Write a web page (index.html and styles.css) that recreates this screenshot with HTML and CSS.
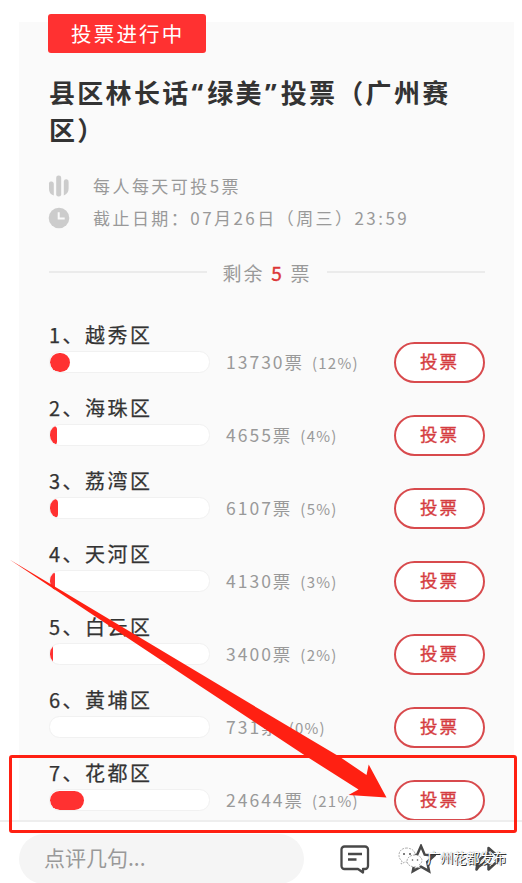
FILE: index.html
```html
<!DOCTYPE html>
<html lang="zh-CN">
<head>
<meta charset="utf-8">
<title>县区林长话“绿美”投票</title>
<link rel="stylesheet" href="styles.css">
</head>
<body>
<div class="screen">
  <main class="card">
    <span class="status">投票进行中</span>
    <h1 class="title">县区林长话<span class="quote">“</span>绿美<span class="quote">”</span>投票（广州赛<br>区）</h1>
    <div class="info">
      <svg class="info-icon" viewBox="0 0 22 22"><g fill="#ccc"><path d="M1 9.500a2.400 2.400 0 0 1 4.800-1v12Q1 19 1 14z"/><rect x="8.200" y=".5" width="5" height="21" rx="2.300"/><path d="M20.600 7a2.400 2.400 0 0 0-4.800-.5v14q4.800-2 4.800-7z"/></g></svg>
      <span class="info-text">每人每天可投5票</span>
    </div>
    <div class="info">
      <svg class="info-icon" viewBox="0 0 22 22"><circle cx="11" cy="11" r="10.300" fill="#ccc"/><path d="M10.700 5.200v6.200h6" fill="none" stroke="#fafafa" stroke-width="2"/></svg>
      <span class="info-text">截止日期：07月26日（周三）23:59</span>
    </div>
    <div class="remain"><span class="remain-text">剩余 <b class="remain-count">5</b> 票</span></div>
    <ul class="list">
      <li class="row"><div class="option"><div class="name">1、越秀区</div><div class="bar"><div class="fill" style="width:20px"></div></div></div><div class="votes">13730票<small>(12%)</small></div><button class="vote">投票</button></li>
      <li class="row"><div class="option"><div class="name">2、海珠区</div><div class="bar"><div class="fill" style="width:6.5px"></div></div></div><div class="votes">4655票<small>(4%)</small></div><button class="vote">投票</button></li>
      <li class="row"><div class="option"><div class="name">3、荔湾区</div><div class="bar"><div class="fill" style="width:8px"></div></div></div><div class="votes">6107票<small>(5%)</small></div><button class="vote">投票</button></li>
      <li class="row"><div class="option"><div class="name">4、天河区</div><div class="bar"><div class="fill" style="width:5px"></div></div></div><div class="votes">4130票<small>(3%)</small></div><button class="vote">投票</button></li>
      <li class="row"><div class="option"><div class="name">5、白云区</div><div class="bar"><div class="fill" style="width:3.3px"></div></div></div><div class="votes">3400票<small>(2%)</small></div><button class="vote">投票</button></li>
      <li class="row"><div class="option"><div class="name">6、黄埔区</div><div class="bar"><div class="fill" style="width:0"></div></div></div><div class="votes">731票<small>(0%)</small></div><button class="vote">投票</button></li>
      <li class="row"><div class="option"><div class="name">7、花都区</div><div class="bar"><div class="fill" style="width:33.5px"></div></div></div><div class="votes">24644票<small>(21%)</small></div><button class="vote">投票</button></li>
    </ul>
  </main>
  <footer class="toolbar">
    <div class="comment">点评几句...</div>
    <svg class="tool comment-icon" viewBox="0 0 30 30"><g fill="none" stroke="#484848" stroke-width="2.300" stroke-linejoin="round"><path d="M4.500 2.500h20.500a3 3 0 0 1 3 3v16.500a3 3 0 0 1-3 3h-2v3.500l-5-3.500H4.500a3 3 0 0 1-3-3v-16.500a3 3 0 0 1 3-3z"/><path d="M8 10h14M8 15.500h8.500"/></g></svg>
    <svg class="tool star-icon" viewBox="0 0 30 30"><path d="M15 2l3.700 8.700 9.500 1-7 6.300 1.900 9.200L15 22.600l-8.200 4.600L8.700 18l-7-6.300 9.500-1z" fill="none" stroke="#484848" stroke-width="2.500"/></svg>
    <svg class="tool share-icon" viewBox="0 0 30 30"><path d="M15.500 4l12 10.500-12 11v-6.500q-8 0-12 6.500 1-13 12-14.500z" fill="none" stroke="#484848" stroke-width="2.500" stroke-linejoin="round"/></svg>
  </footer>
  <div class="watermark">
    <svg class="wechat" viewBox="0 0 26 22"><g fill="#fff" stroke="#999" stroke-width=".8" stroke-dasharray="2 1"><path d="M9 1C4 1 1 4 1 8q0 4 3 6l-1 3 4-2q9 1 10-7 0-6-8-7z"/><path d="M17 8c-5 0-8 3-8 6 0 4 4 6 9 6l4 1-1-3c6-4 2-10-4-10z"/></g><g fill="#555"><circle cx="6" cy="7" r="1"/><circle cx="12" cy="7" r="1"/><circle cx="14.500" cy="13" r=".8"/><circle cx="19.500" cy="13" r=".8"/></g></svg>
    <span>广州花都发布</span>
  </div>
  <div class="highlight"></div>
  <svg class="arrow" viewBox="0 0 522 883"><path d="M9.500 559.500L200 673.500 260 709.500 340 757 366.500 775 368.700 764.500 386.500 797.500 348.500 795 358.500 789.500 305 755.500 200 686z" fill="#ff2012"/></svg>
</div>
</body>
</html>
```
FILE: styles.css
```css
* { box-sizing: border-box; }
body {
  margin: 0;
  background: #fff;
  color: #333;
  font-family: "Noto Sans CJK SC", sans-serif;
}
.screen {
  position: relative;
  width: 522px;
  height: 883px;
  overflow: hidden;
  display: flex;
  flex-direction: column;
  padding-top: 14px;
}
.card {
  height: 806px;
  flex: none;
  margin: 0 8px 0 19px;
  padding: 0 30px;
  background: linear-gradient(#fff 8px, #fafafa 8px);
  overflow: hidden;
}
.status {
  display: block;
  width: 158px;
  height: 39px;
  padding-left: 23px;
  border-radius: 3px;
  background: #ff3131;
  color: #fff;
  font-size: 20.500px;
  letter-spacing: 2.200px;
  line-height: 39px;
  margin-left: -1px;
}
.title {
  margin: 20px -10px 0 0;
  font-size: 26px;
  line-height: 37px;
  letter-spacing: 2.300px;
  font-weight: 700;
  white-space: nowrap;
}
.quote {
  display: inline-block;
  width: 16.800px;
  padding-left: 1px;
  font-family: "Noto Sans", sans-serif;
  line-height: 1;
}
.info {
  display: flex;
  align-items: center;
  height: 32px;
  gap: 23px;
  color: #999;
  font-size: 17px;
  letter-spacing: 2.450px;
  white-space: nowrap;
}
.info-text { padding-bottom: 2px; }
.title + .info { margin-top: 23px; }
.info-icon { width: 22px; height: 22px; flex: none; margin-left: -1px; }
.remain {
  display: flex;
  align-items: center;
  gap: 15px;
  height: 30px;
  margin-top: 23px;
  margin-right: -1px;
  color: #999;
  font-size: 19px;
}
.remain::before, .remain::after {
  content: "";
  flex: 1;
  height: 2px;
  background: #ebebeb;
}
.remain-text { letter-spacing: 2.200px; white-space: pre; }
.remain-count {
  color: #dc3638;
  font-weight: 400;
  -webkit-text-stroke: .4px #dc3638;
}
.list { list-style: none; margin: 34px 0 0; padding: 0; }
.row { display: flex; height: 73px; }
.option { width: 162px; flex: none; }
.name {
  height: 30px;
  font-size: 20px;
  line-height: 28px;
  letter-spacing: 2.500px;
  white-space: nowrap;
  -webkit-text-stroke: .25px #333;
}
.bar {
  width: 161px;
  height: 22px;
  border: 1px solid #f1f1f1;
  border-radius: 10.500px;
  background: #fff;
  overflow: hidden;
}
.fill { height: 19px; margin-top: .5px; border-radius: 9.500px; background: #ff3131; }
.votes {
  margin: 30px 0 0 15px;
  width: 154px;
  flex: none;
  height: 21px;
  line-height: 21px;
  color: #999;
  font-size: 17.500px;
  letter-spacing: 2px;
  white-space: nowrap;
}
.votes small { margin-left: 8px; font-size: 15px; letter-spacing: 1.200px; }
.vote {
  width: 91px;
  height: 41px;
  flex: none;
  margin: 21px 0 0 14px;
  padding: 0 0 3px;
  border: 2px solid #d84a4d;
  border-radius: 21px;
  background: #fff;
  color: #d53c40;
  font: 400 17.500px/34px "Noto Sans CJK SC", sans-serif;
  letter-spacing: 2px;
  -webkit-text-stroke: .3px #d53c40;
}
.toolbar {
  display: flex;
  height: 63px;
  flex: none;
  border-top: 2px solid #eee;
  background: #fff;
  padding: 12px 0 0 19px;
}
.comment {
  width: 285px;
  height: 50px;
  padding-left: 25px;
  border-radius: 25px;
  background: #f5f5f5;
  color: #999;
  font-size: 21px;
  line-height: 47px;
}
.tool { width: 30px; height: 30px; flex: none; margin-top: 10px; }
.comment-icon { margin-left: 36px; }
.star-icon { margin-left: 36px; }
.share-icon { margin-left: 37px; }
.watermark {
  position: absolute;
  left: 398px;
  top: 847px;
  display: flex;
  align-items: center;
  gap: 3px;
  height: 22px;
  color: #fff;
  font-size: 13.200px;
  line-height: 22px;
  white-space: nowrap;
  text-shadow: 1px 1px 0 #333, 0 0 1px #777;
}
.wechat { width: 26px; height: 22px; }
.highlight {
  position: absolute;
  left: 9px;
  top: 755px;
  width: 508px;
  height: 78px;
  border: 3px solid #ff2012;
  border-radius: 3px;
}
.arrow { position: absolute; left: 0; top: 0; width: 522px; height: 883px; }
```
